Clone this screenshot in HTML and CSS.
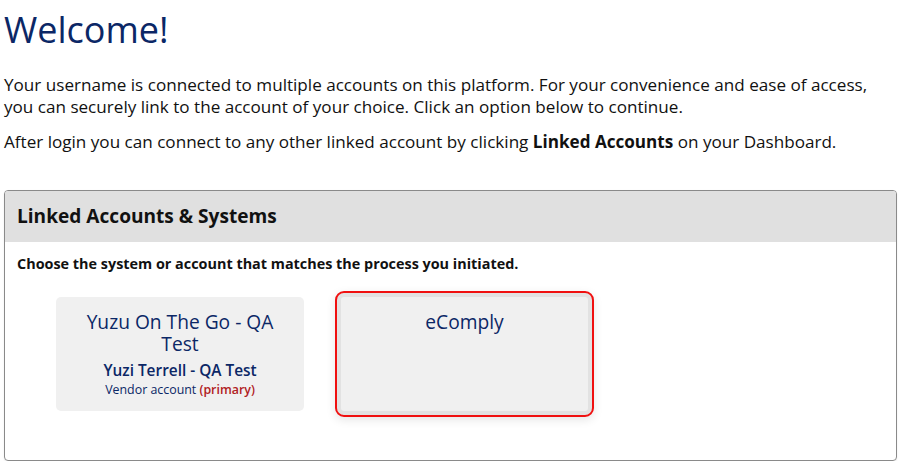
FILE: index.html
```html
<!DOCTYPE html>
<html lang="en">
<head>
<meta charset="utf-8">
<title>Welcome</title>
<link rel="stylesheet" href="styles.css">
</head>
<body>
<main class="page">
  <h1 class="title">Welcome!</h1>
  <p class="intro">Your username is connected to multiple accounts on this platform. For your convenience and ease of access, you can securely link to the account of your choice. Click an option below to continue.</p>
  <p class="intro">After login you can connect to any other linked account by clicking <strong>Linked Accounts</strong> on your Dashboard.</p>

  <section class="panel">
    <header class="panel-head">Linked Accounts &amp; Systems</header>
    <div class="panel-body">
      <p class="hint">Choose the system or account that matches the process you initiated.</p>
      <div class="cards">
        <a class="card" href="#">
          <div class="card-title">Yuzu On The Go - QA Test</div>
          <div class="card-sub">Yuzi Terrell - QA Test</div>
          <div class="card-meta">Vendor account <span class="primary">(primary)</span></div>
        </a>
        <a class="card card-active" href="#">
          <div class="card-title">eComply</div>
        </a>
      </div>
    </div>
  </section>
</main>
</body>
</html>
```
FILE: styles.css
```css
html, body {
  margin: 0;
  padding: 0;
  background: #ffffff;
}
body {
  font-family: "Open Sans", "Liberation Sans", Arial, sans-serif;
  color: #111111;
}
.page {
  padding: 7px 3px 0 4px;
}
.title {
  margin: 0 0 21px 0;
  font-size: 36px;
  line-height: 46px;
  font-weight: 400;
  color: #0b2766;
}
.intro {
  margin: 0 0 13px 0;
  font-size: 17.1px;
  line-height: 22px;
}
.intro strong {
  font-weight: 700;
}
.panel {
  margin-top: 37px;
  border: 1px solid #8a8a8a;
  border-radius: 4px;
  box-shadow: 0 1px 2px rgba(0,0,0,0.08);
}
.panel-head {
  background: #e0e0e0;
  padding: 12px 12px;
  font-size: 19.1px;
  line-height: 27px;
  font-weight: 700;
  border-radius: 3px 3px 0 0;
}
.panel-body {
  padding: 12px 12px 49px 12px;
}
.hint {
  margin: 0 0 24px 0;
  font-size: 14.4px;
  line-height: 19px;
  font-weight: 700;
}
.cards {
  display: flex;
  align-items: stretch;
  gap: 37px;
  margin-left: 39px;
}
.card {
  width: 248px;
  box-sizing: border-box;
  padding: 14px 16px 13px 16px;
  background: #f0f0f0;
  border-radius: 5px;
  text-align: center;
  text-decoration: none;
  color: #0b2766;
}
.card-active {
  width: 247px;
  outline: 2px solid #f01010;
  outline-offset: 4px;
  border-radius: 3px;
  box-shadow: 0 0 0 4px #e2e2e2, 0 3px 10px 6px rgba(0,0,0,0.10);
}
.card-title {
  font-size: 19.2px;
  line-height: 22.4px;
  font-weight: 500;
}
.card-sub {
  margin-top: 4px;
  font-size: 15.4px;
  line-height: 21px;
  font-weight: 600;
}
.card-meta {
  font-size: 12.4px;
  line-height: 17px;
}
.primary {
  color: #b0201e;
  font-weight: 600;
}
```
